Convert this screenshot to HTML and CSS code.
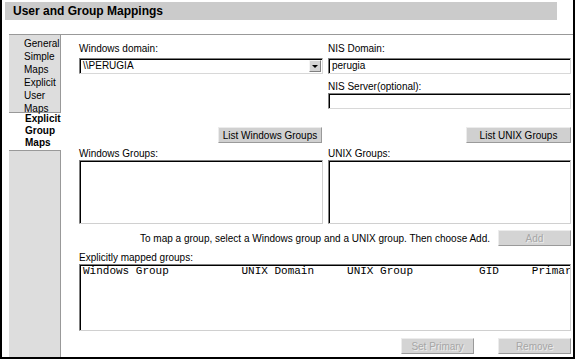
FILE: index.html
```html
<!DOCTYPE html>
<html>
<head>
<meta charset="utf-8">
<link rel="stylesheet" href="styles.css">
</head>
<body>
<div class="frame">
  <div class="title">User and Group Mappings</div>
  <div class="panel">
    <nav class="tabs">
      <div class="tab">General</div>
      <div class="tab">Simple<br>Maps</div>
      <div class="tab">Explicit<br>User<br>Maps</div>
      <div class="tab active">Explicit<br>Group<br>Maps</div>
    </nav>
    <main class="content">
      <div class="grid">
        <div class="col">
          <label class="lbl">Windows domain:</label>
          <div class="field select"><span>\\PERUGIA</span><span class="arrow"></span></div>
        </div>
        <div class="col">
          <label class="lbl">NIS Domain:</label>
          <div class="field">perugia</div>
          <label class="lbl lbl-next">NIS Server(optional):</label>
          <div class="field"></div>
        </div>
      </div>
      <div class="grid btnrow">
        <div class="cell-end"><button class="btn btn-win">List Windows Groups</button></div>
        <div class="cell-end"><button class="btn btn-unix">List UNIX Groups</button></div>
      </div>
      <div class="grid lists">
        <div>
          <label class="lbl-list">Windows Groups:</label>
          <div class="listbox"></div>
        </div>
        <div>
          <label class="lbl-list">UNIX Groups:</label>
          <div class="listbox"></div>
        </div>
      </div>
      <div class="addrow">
        <span>To map a group, select a Windows group and a UNIX group. Then choose Add.</span>
        <button class="btn btn-small disabled">Add</button>
      </div>
      <label class="lbl-list lbl-mapped">Explicitly mapped groups:</label>
      <div class="listbox big"><div class="mono">Windows Group           UNIX Domain     UNIX Group          GID     Primary</div></div>
      <div class="bottombtns">
        <button class="btn btn-small disabled">Set Primary</button>
        <button class="btn btn-small disabled">Remove</button>
      </div>
    </main>
  </div>
</div>
</body>
</html>
```

FILE: styles.css
```css
body {
  margin: 0;
  font-family: "Liberation Sans", Arial, sans-serif;
  font-size: 10px;
  color: #000;
  background: #fff;
}

.frame {
  width: 575px;
  height: 359px;
  box-sizing: border-box;
  border-left: 2px solid #000;
  border-right: 2px solid #000;
  border-bottom: 2px solid #000;
  display: flex;
  flex-direction: column;
}

.title {
  margin: 2px 0 0 3px;
  width: 552px;
  height: 18px;
  box-sizing: border-box;
  padding-left: 8px;
  background: #cbcbcb;
  font-weight: bold;
  font-size: 12px;
  line-height: 18px;
}

.panel {
  margin: 14px 0 0 7px;
  border-top: 1px solid #999;
  flex: 1;
  display: flex;
  min-width: 0;
}

.tabs {
  width: 51px;
  flex: none;
  background: #dddddd;
  border-right: 1px solid #999;
  padding-top: 2px;
}

.tab {
  padding-left: 15px;
  line-height: 13px;
}

.tab.active {
  background: #fff;
  margin-right: -1px;
  margin-top: -3px;
  border-top: 1px solid #999;
  border-bottom: 1px solid #999;
  font-weight: bold;
  line-height: 12px;
  padding: 0 0 1px 16px;
}

.content {
  flex: 1;
  min-width: 0;
  padding: 7px 2px 0 18px;
}

.grid {
  display: grid;
  grid-template-columns: 244px 243px;
  column-gap: 5px;
}

label {
  display: block;
}

.lbl {
  line-height: 13px;
  margin-bottom: 3px;
}

.lbl-next {
  margin-top: 6px;
  margin-bottom: 0;
}

.field {
  height: 16px;
  box-sizing: border-box;
  border: 1px solid;
  border-color: #808080 #d8d8d8 #d8d8d8 #808080;
  box-shadow: inset 1px 1px #000;
  padding-left: 3px;
  line-height: 14px;
  background: #fff;
}

.select {
  display: flex;
  align-items: center;
  justify-content: space-between;
  padding-right: 1px;
}

.arrow {
  width: 12px;
  height: 12px;
  box-sizing: border-box;
  background: #d4d4d4;
  border: 1px solid;
  border-color: #f4f4f4 #808080 #808080 #f4f4f4;
  display: flex;
  align-items: center;
  justify-content: center;
}

.arrow::after {
  content: "";
  border-left: 3px solid transparent;
  border-right: 3px solid transparent;
  border-top: 3px solid #000;
  margin-top: 1px;
}

.btnrow {
  margin-top: 18px;
}

.cell-end {
  display: flex;
  justify-content: flex-end;
}

.btn {
  font-family: "Liberation Sans", Arial, sans-serif;
  font-size: 10px;
  height: 16px;
  padding: 0;
  background: #d0d0d0;
  color: #000;
  border: 1px solid;
  border-color: #ececec #9a9a9a #9a9a9a #ececec;
}

.btn-win {
  width: 104px;
  margin-right: 1px;
}

.btn-unix {
  width: 105px;
}

.btn-small {
  width: 73px;
}

.disabled {
  color: #a6a6a6;
  text-shadow: 1px 1px 0 #ececec;
  background: #d4d4d4;
}

.lists {
  margin-top: 5px;
}

.lbl-list {
  line-height: 12px;
}

.listbox {
  height: 64px;
  box-sizing: border-box;
  border: 1px solid;
  border-color: #808080 #d0d0d0 #d0d0d0 #808080;
  box-shadow: inset 1px 1px #000;
  background: #fff;
  overflow: hidden;
}

.addrow {
  margin-top: 6px;
  display: flex;
  justify-content: flex-end;
  align-items: center;
  gap: 8px;
}

.lbl-mapped {
  margin-top: 6px;
}

.listbox.big {
  height: 67px;
}

.mono {
  font-family: "Liberation Mono", "Courier New", monospace;
  font-size: 11px;
  line-height: 11px;
  white-space: pre;
  padding: 1px 0 0 3px;
}

.bottombtns {
  margin-top: 7px;
  display: flex;
  justify-content: flex-end;
  gap: 24px;
}
```
